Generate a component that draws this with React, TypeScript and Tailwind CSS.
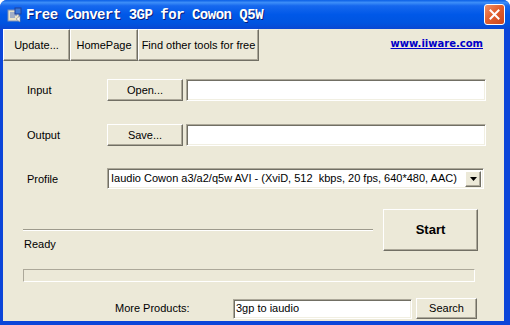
import React from "react";

const raised =
  "border border-t-white border-l-white border-b-[#716F64] border-r-[#716F64] shadow-[inset_-1px_-1px_0_#ACA899] bg-[#ECE9D8]";
const sunken =
  "border border-t-[#ACA899] border-l-[#ACA899] border-b-white border-r-white shadow-[inset_1px_1px_0_#716F64,inset_-1px_-1px_0_#F1EFE2] bg-white";

function AppIcon() {
  return (
    <svg width="16" height="16" viewBox="0 0 16 16">
      <rect x="2" y="3" width="11" height="11" fill="#E9E2C8" stroke="#7A8FB8" />
      <path d="M4 6h7M4 8h7M4 10h5" stroke="#5A7BC4" strokeWidth="1" />
      <rect x="9" y="1" width="6" height="6" fill="#3E79D6" stroke="#1C3F9A" />
      <path d="M10 12l4-3v6z" fill="#F5F5F5" stroke="#8A8A8A" strokeWidth="0.6" />
    </svg>
  );
}

function CloseButton() {
  return (
    <div className="w-[21px] h-[21px] rounded-[3px] border border-white bg-[linear-gradient(135deg,#F0916A_0%,#E2602F_45%,#C9461E_100%)] flex items-center justify-center">
      <svg width="11" height="11" viewBox="0 0 11 11">
        <path d="M1.5 1.5l8 8M9.5 1.5l-8 8" stroke="white" strokeWidth="2" strokeLinecap="square" />
      </svg>
    </div>
  );
}

export default function App() {
  return (
    <div className="w-[510px] h-[325px] bg-white font-['Liberation_Sans',Arial,sans-serif] text-[11px] text-black">
      <div className="h-full flex flex-col rounded-t-[7px] overflow-hidden bg-[#0B45D9]">
        {/* Title bar */}
        <div className="h-[29px] flex items-center pl-[6px] pr-[5px] bg-[linear-gradient(to_bottom,#0A5FE6_0%,#3D8EF8_9%,#1668EE_20%,#0058E8_50%,#0054E0_80%,#0A47D2_100%)]">
          <AppIcon />
          <span className="ml-[4px] font-['Liberation_Mono',monospace] font-bold text-[14px] tracking-[-0.5px] text-white whitespace-pre [text-shadow:1px_1px_0_#0a1e7a] leading-none">
            Free Convert 3GP for Cowon Q5W
          </span>
          <div className="ml-auto">
            <CloseButton />
          </div>
        </div>

        {/* Client area */}
        <div className="flex-1 ml-[3px] mr-[6px] mb-[4px] bg-[#ECE9D8] flex flex-col">
          {/* Toolbar */}
          <div className="h-[32px] flex">
            <div className={`${raised} w-[67px] flex items-center justify-center`}>Update...</div>
            <div className={`${raised} w-[68px] flex items-center justify-center`}>HomePage</div>
            <div className={`${raised} w-[121px] flex items-center justify-center whitespace-nowrap`}>
              Find other tools for free
            </div>
            <span className="ml-auto mr-[21px] mt-[7px] self-start font-['DejaVu_Sans',sans-serif] font-bold text-[10px] text-[#0000C8] underline">
              www.iiware.com
            </span>
          </div>

          {/* Input */}
          <div className="mt-[18px] h-[22px] flex items-center">
            <span className="pl-[24px] w-[104px]">Input</span>
            <div className={`${raised} w-[76px] h-[22px] flex items-center justify-center`}>Open...</div>
            <div className={`${sunken} ml-[3px] w-[300px] h-[22px]`} />
          </div>

          {/* Output */}
          <div className="mt-[23px] h-[22px] flex items-center">
            <span className="pl-[24px] w-[104px]">Output</span>
            <div className={`${raised} w-[76px] h-[22px] flex items-center justify-center`}>Save...</div>
            <div className={`${sunken} ml-[3px] w-[300px] h-[22px]`} />
          </div>

          {/* Profile */}
          <div className="mt-[22px] h-[21px] flex items-center">
            <span className="pl-[24px] w-[104px] pt-[1px]">Profile</span>
            <div className={`${sunken} w-[377px] h-[21px] flex items-center p-[2px]`}>
              <span className="flex-1 pl-[1px] whitespace-pre overflow-hidden">
                Iaudio Cowon a3/a2/q5w AVI - (XviD, 512  kbps, 20 fps, 640*480, AAC)
              </span>
              <div className={`${raised} w-[16px] h-[16px] flex items-center justify-center`}>
                <svg width="7" height="4" viewBox="0 0 7 4">
                  <path d="M0 0h7L3.5 4z" fill="black" />
                </svg>
              </div>
            </div>
          </div>

          {/* Status + Start */}
          <div className="mt-[20px] flex">
            <div className="ml-[20px] w-[350px] flex flex-col">
              <div className="mt-[20px] h-[2px] border-t border-t-[#9D9A8C] border-b border-b-white" />
              <span className="mt-[7px] pl-[1px] leading-[13px]">Ready</span>
            </div>
            <div className={`${raised} ml-[10px] w-[95px] h-[42px] flex items-center justify-center font-bold text-[13px]`}>
              Start
            </div>
          </div>

          {/* Progress */}
          <div className="mt-[18px] ml-[20px] w-[452px] h-[13px] border border-t-[#ACA899] border-l-[#ACA899] border-b-white border-r-white" />

          {/* More products */}
          <div className="mt-[16px] h-[21px] flex items-center">
            <span className="ml-[112px] w-[118px]">More Products:</span>
            <div className={`${sunken} w-[179px] h-[20px] flex items-center pl-[2px]`}>3gp to iaudio</div>
            <div className={`${raised} ml-[4px] w-[61px] h-[21px] flex items-center justify-center`}>Search</div>
          </div>
        </div>
      </div>
    </div>
  );
}
